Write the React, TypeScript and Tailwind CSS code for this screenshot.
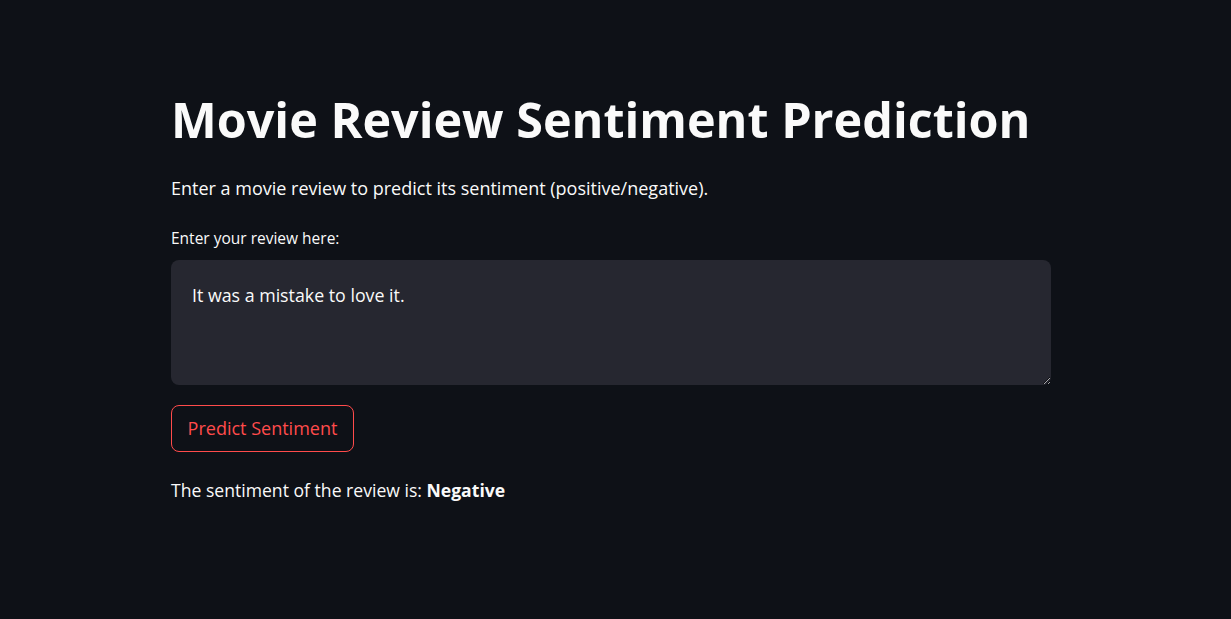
import React from "react";

const FONT = '"Open Sans", "Noto Sans", sans-serif';

export default function App() {
  return (
    <div
      className="min-h-[619px] w-full bg-[#0e1117] text-[#fafafa]"
      style={{ fontFamily: FONT }}
    >
      <div className="ml-[171px] w-[880px] pt-[89px]">
        <h1 className="text-[48.5px] font-bold leading-[60px] whitespace-nowrap">
          Movie Review Sentiment Prediction
        </h1>
        <p className="mt-[27px] text-[18px] leading-[24px]">
          Enter a movie review to predict its sentiment (positive/negative).
        </p>
        <div className="mt-[28px] text-[15.5px] leading-[20px]">Enter your review here:</div>
        <textarea
          className="mt-[12px] block h-[125px] w-full resize-y rounded-[8px] bg-[#262730] px-[21px] pt-[24px] pb-[10px] text-[17.8px] leading-[22px] text-[#fafafa] outline-none"
          style={{ fontFamily: FONT }}
          defaultValue="It was a mistake to love it."
        />
        <button className="mt-[20px] flex h-[47px] w-[183px] items-center justify-center rounded-[8px] border border-[#ff4b4b] text-[18px] text-[#ff4b4b]">
          Predict Sentiment
        </button>
        <p className="mt-[26px] text-[17.6px] leading-[24px]">
          The sentiment of the review is: <span className="font-bold">Negative</span>
        </p>
      </div>
    </div>
  );
}
